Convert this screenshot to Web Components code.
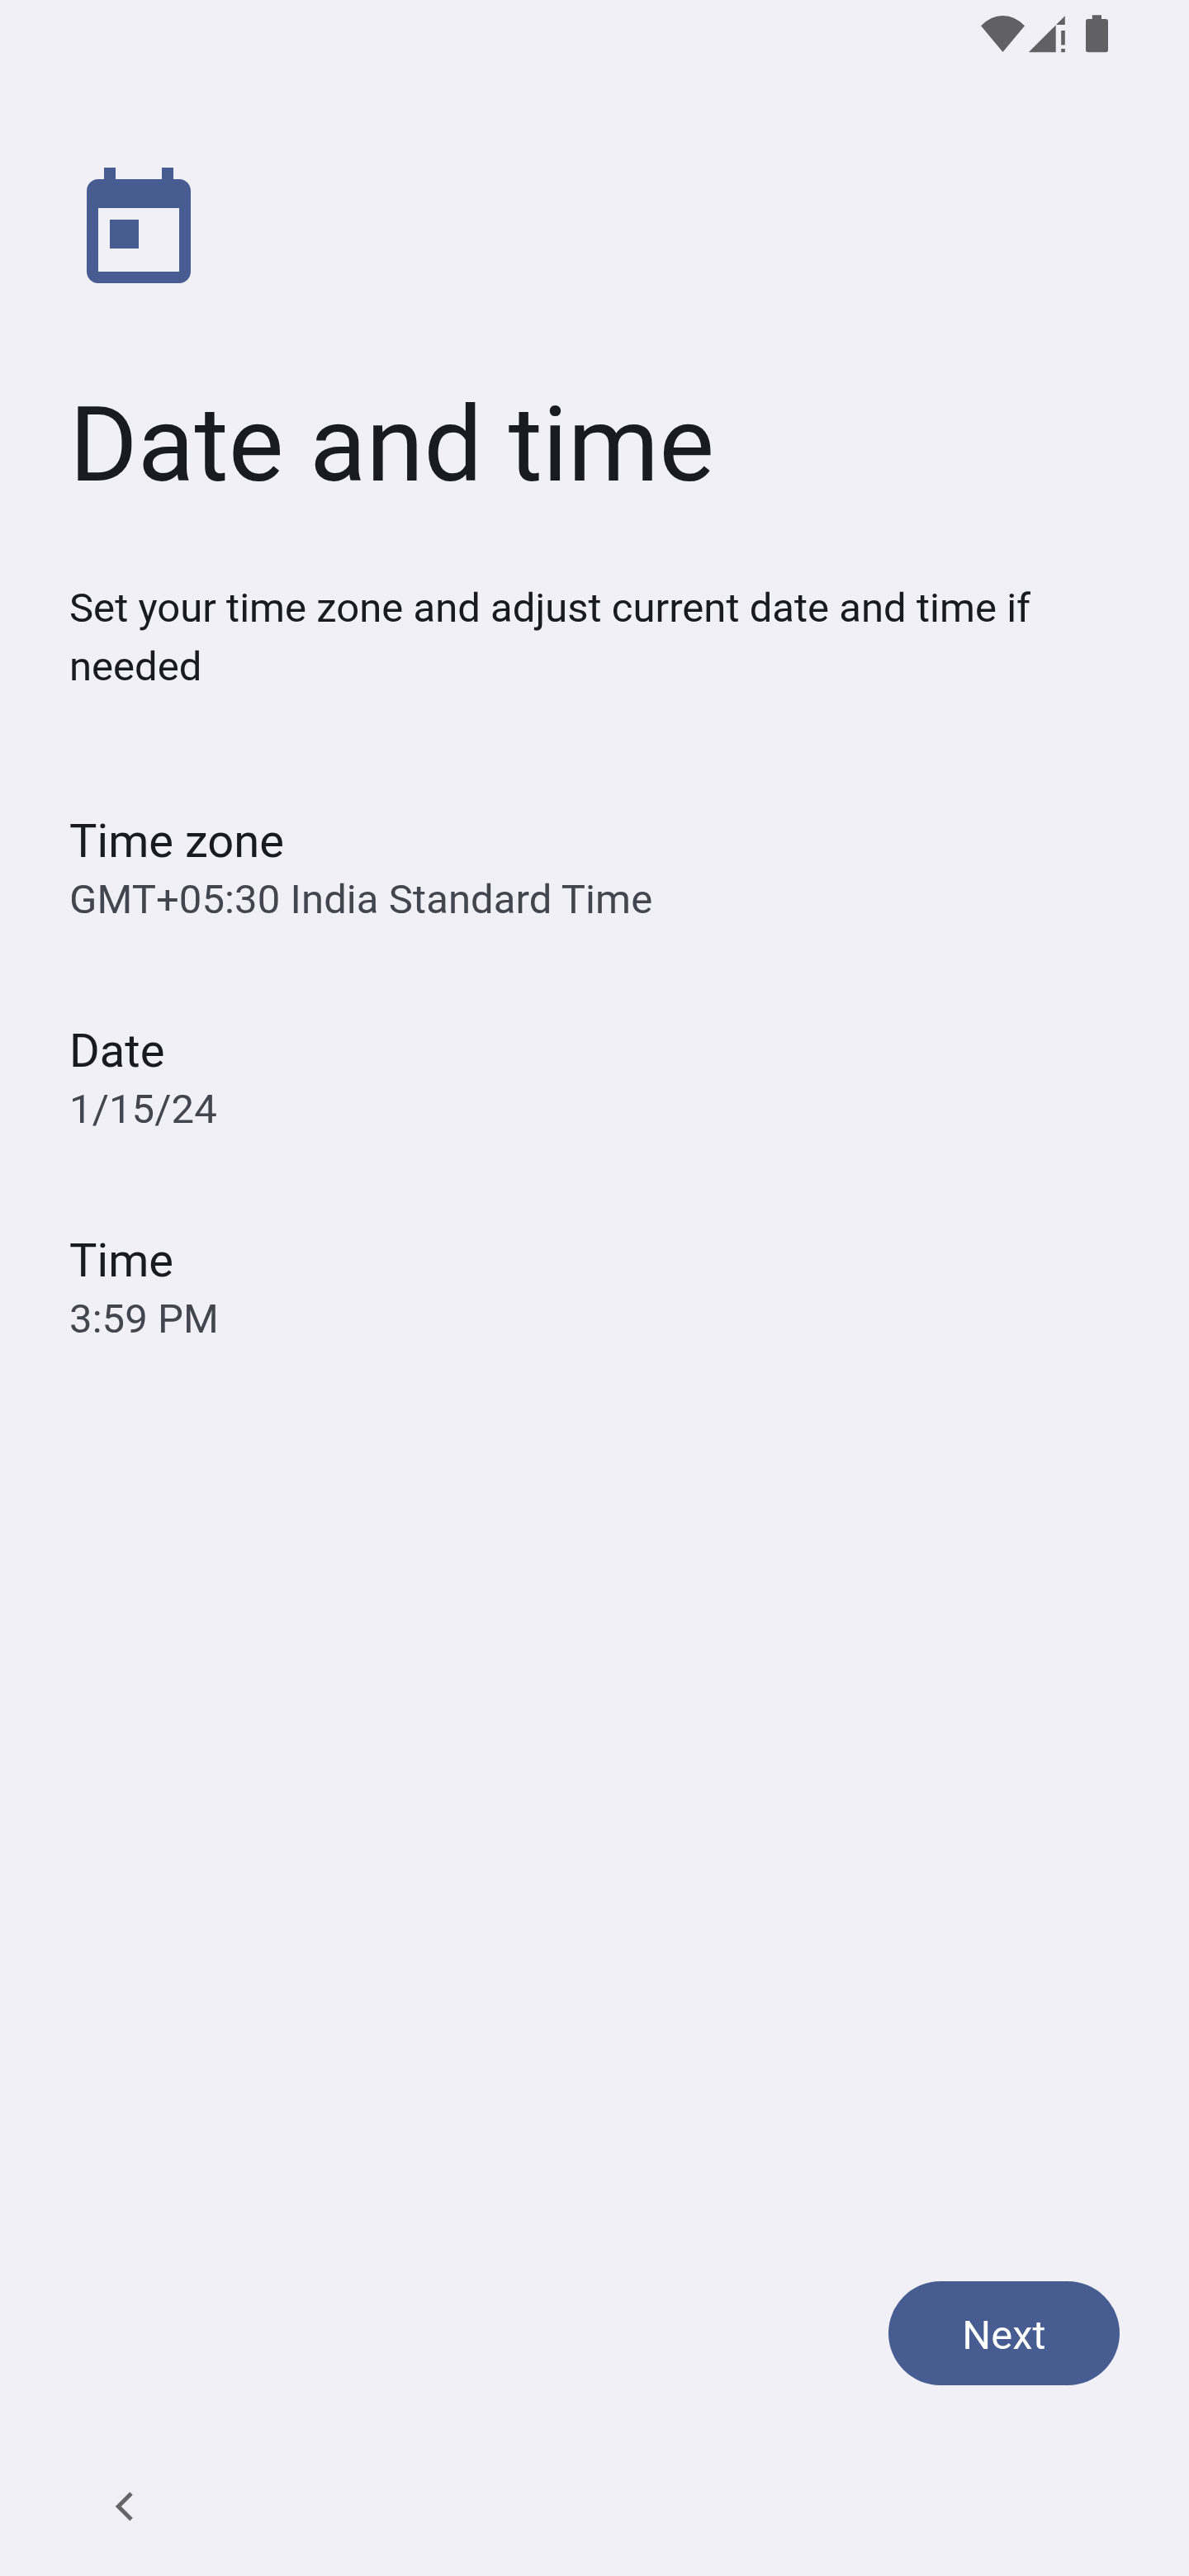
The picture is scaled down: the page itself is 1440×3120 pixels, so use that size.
<!DOCTYPE html>
<html lang="en">
<head>
<meta charset="utf-8">
<title>Date and time</title>
<style>
html,body{margin:0;background:#f1f0f7}
body{font-family:Roboto,"Liberation Sans",sans-serif}
</style>
</head>
<body>
<setup-screen>
  <status-bar slot="status"></status-bar>
  <setup-header slot="header">
    <span slot="title">Date and time</span>
    <span slot="description">Set your time zone and adjust current date and time if needed</span>
  </setup-header>
  <setting-row><span slot="label">Time zone</span><span slot="value">GMT+05:30 India Standard Time</span></setting-row>
  <setting-row><span slot="label">Date</span><span slot="value">1/15/24</span></setting-row>
  <setting-row><span slot="label">Time</span><span slot="value">3:59 PM</span></setting-row>
  <primary-button slot="footer">Next</primary-button>
  <nav-bar slot="nav"></nav-bar>
</setup-screen>
<script>
const define = (name, markup) => customElements.define(name, class extends HTMLElement {
  constructor() {
    super();
    this.attachShadow({ mode: 'open' }).innerHTML = markup;
  }
});

define('status-bar', `
<style>
:host{display:flex;justify-content:flex-end;align-items:flex-start;height:84px;box-sizing:border-box;padding:14px 94px 0 0;color:#616163}
svg{display:block}
</style>
<svg width="160" height="56" viewBox="1186 14 160 56" fill="currentColor" aria-hidden="true">
  <path d="M1188 31.2Q1200 19 1214.5 19T1241 31.2L1214.5 63Z"/>
  <path d="M1245.8 63.3L1278.7 30.4V63.3ZM1279.1 30L1289.8 19.3V30Z"/>
  <path d="M1285.2 37H1289.8V54.6H1285.2ZM1285.2 59H1289.8V63.3H1285.2Z"/>
  <path d="M1322.8 18.2H1334V22.9H1339.200Q1342 22.9 1342 25.700V60.500Q1342 63.3 1339.200 63.3H1317.800Q1315 63.3 1315 60.500V25.700Q1315 22.9 1317.800 22.9H1322.800Z"/>
</svg>`);

define('setup-header', `
<style>
:host{display:block;padding:112px 84px 0}
svg{display:block;fill:#475d92}
h1{margin:98px 0 0;font-size:126px;line-height:154px;font-weight:400;letter-spacing:.08px}
p{margin:85px 0 0;font-size:49px;line-height:71px;letter-spacing:.03px}
</style>
<svg width="168" height="168" viewBox="0 0 24 24" aria-hidden="true">
  <path d="M19 3h-1V1h-2v2H8V1H6v2H5C3.890 3 3.010 3.900 3.010 5L3 19c0 1.100.890 2 2 2h14c1.100 0 2-.900 2-2V5c0-1.100-.900-2-2-2zm0 16H5V8h14v11zM7 10h5v5H7z"/>
</svg>
<h1><slot name="title"></slot></h1>
<p><slot name="description"></slot></p>`);

define('setting-row', `
<style>
:host{display:flex;flex-direction:column;gap:2px}
.label{font-size:56px;line-height:68px;letter-spacing:.05px}
.value{font-size:49px;line-height:70px;letter-spacing:.09px;color:#44464f}
</style>
<div class="label"><slot name="label"></slot></div>
<div class="value"><slot name="value"></slot></div>`);

define('primary-button', `
<style>
:host{display:block}
button{display:flex;align-items:center;justify-content:center;width:280px;height:126px;padding:5px 0 0;box-sizing:border-box;border:0;border-radius:63px;background:#475d92;color:#fff;font:400 49px/58px Roboto,"Liberation Sans",sans-serif}
</style>
<button type="button"><slot></slot></button>`);

define('nav-bar', `
<style>
:host{display:flex;align-items:center;height:168px;padding-left:136px;color:#666}
svg{display:block}
</style>
<svg width="28" height="42" viewBox="136 3015 28 42" fill="none" stroke="currentColor" stroke-width="5" aria-label="Back">
  <path d="M159 3020L143.300 3035.700L159 3051.400"/>
</svg>`);

define('setup-screen', `
<style>
:host{display:flex;flex-direction:column;width:1440px;height:3120px;background:#f1f0f7;color:#1a1b20;overflow:hidden}
main{display:flex;flex-direction:column;gap:114px;padding:142px 84px 0;flex:1}
footer{display:flex;justify-content:flex-end;padding:0 84px 63px}
</style>
<slot name="status"></slot>
<slot name="header"></slot>
<main><slot></slot></main>
<footer><slot name="footer"></slot></footer>
<slot name="nav"></slot>`);
</script>
</body>
</html>
